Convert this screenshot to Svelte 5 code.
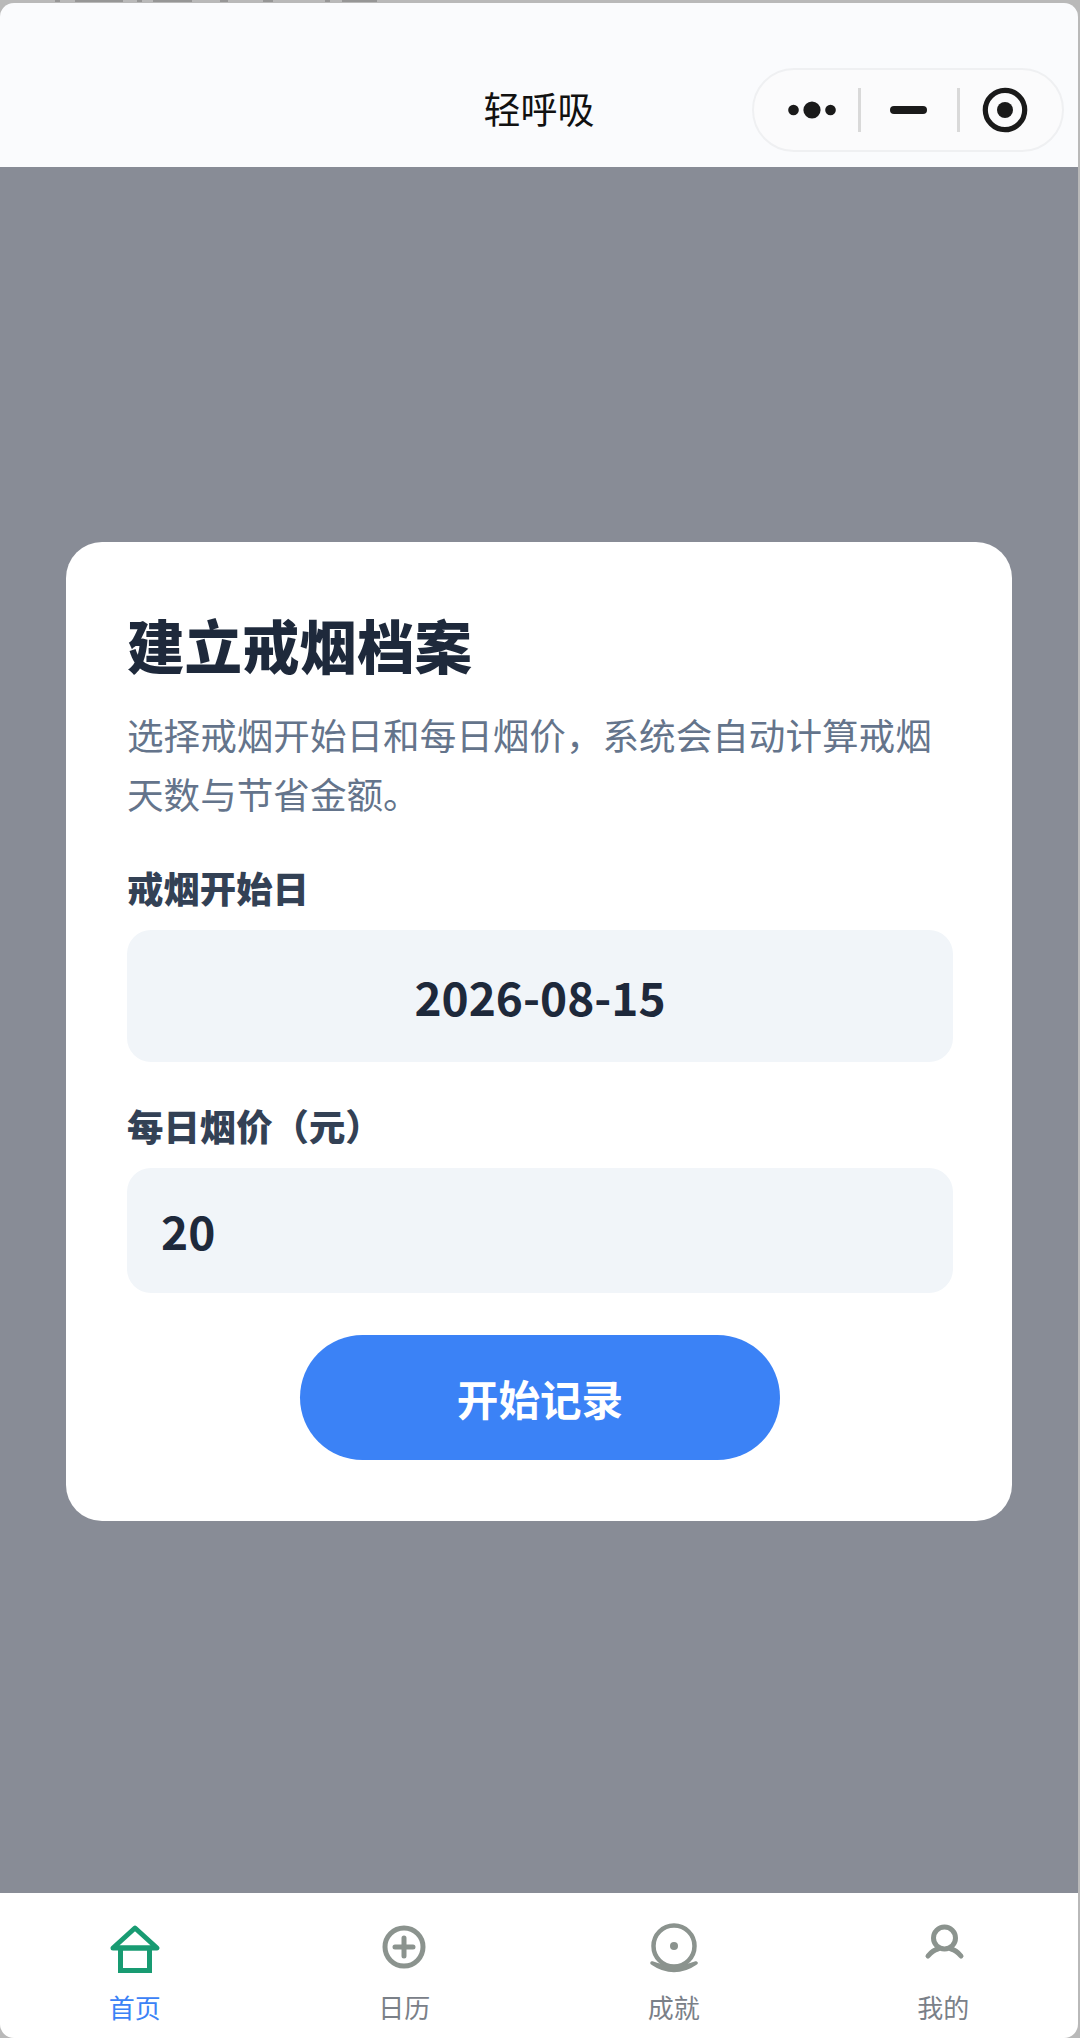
<script>
    const tabs = [
        { label: '首页', icon: 'home', active: true },
        { label: '日历', icon: 'plus' },
        { label: '成就', icon: 'target' },
        { label: '我的', icon: 'user' }
    ];

    // bits of the page behind the window that show above its top edge
    const ghost = [[55, 5], [75, 48], [137, 5], [153, 39], [220, 8], [263, 10], [325, 5], [342, 35]];

    let startDate = '2026-08-15';
    let price = '20';
</script>

<div class="window">
    <svg class="ghost" width="400" height="3">
        {#each ghost as g}
            <rect x={g[0]} y="0" width={g[1]} height="2" />
        {/each}
    </svg>

    <header class="navbar">
        <span class="title">轻呼吸</span>
        <div class="capsule">
            <svg class="cap-icon dots" width="48" height="20" viewBox="0 0 48 20">
                <circle cx="5.5" cy="10" r="5.3" />
                <circle cx="24" cy="10" r="8.6" />
                <circle cx="42.5" cy="10" r="5.3" />
            </svg>
            <i class="sep"></i>
            <svg class="cap-icon dash" width="37" height="10" viewBox="0 0 37 10">
                <rect x="0" y="1" width="37" height="8" rx="4" />
            </svg>
            <i class="sep"></i>
            <svg class="cap-icon target" width="46" height="46" viewBox="0 0 46 46">
                <circle cx="23" cy="23" r="19.7" fill="none" stroke="#1a1a1a" stroke-width="5.2" />
                <circle cx="23" cy="23" r="8" />
            </svg>
        </div>
    </header>

    <main class="mask">
        <section class="card">
            <h1>建立戒烟档案</h1>
            <p class="desc">选择戒烟开始日和每日烟价，系统会自动计算戒烟天数与节省金额。</p>
            <div class="label">戒烟开始日</div>
            <div class="picker">{startDate}</div>
            <div class="label second">每日烟价（元）</div>
            <div class="field">{price}</div>
            <button class="start">开始记录</button>
        </section>
    </main>

    <nav class="tabbar">
        {#each tabs as tab}
            <div class="tab" class:active={tab.active}>
                <svg width="56" height="56" viewBox="0 0 56 56" fill="none">
                    {#if tab.icon === 'home'}
                        <path d="M6 28 L28 8 L50 28 Z" stroke="#189b72" stroke-width="5" stroke-linejoin="round" />
                        <rect x="13.5" y="28" width="29" height="22.5" stroke="#189b72" stroke-width="5" />
                    {:else if tab.icon === 'plus'}
                        <circle cx="28" cy="27" r="19" stroke="#8b938e" stroke-width="5" />
                        <path d="M28 18 V36 M19 27 H37" stroke="#8b938e" stroke-width="5" stroke-linecap="round" />
                    {:else if tab.icon === 'target'}
                        <circle cx="28" cy="26" r="20.5" stroke="#8b938e" stroke-width="4.5" />
                        <circle cx="28" cy="26" r="4" fill="#8b938e" />
                        <path d="M6 43 Q28 58 50 43 Q28 51 6 43 Z" fill="#8b938e" stroke="#8b938e" stroke-width="3.5" stroke-linejoin="round" />
                    {:else}
                        <circle cx="29.5" cy="18" r="11" stroke="#8b938e" stroke-width="5" />
                        <path d="M13 36 Q18 30 23 29 M46 36 Q41 30 36 29" stroke="#8b938e" stroke-width="5" stroke-linecap="round" />
                    {/if}
                </svg>
                <span>{tab.label}</span>
            </div>
        {/each}
    </nav>
</div>

<style>
    :global(body) {
        margin: 0;
        background: #b9b9b9;
    }

    .window {
        position: relative;
        height: 2038px;
        box-sizing: border-box;
        padding: 3px 2px 0 0;
        display: flex;
        flex-direction: column;
        font-family: "Noto Sans CJK SC", "Noto Sans", sans-serif;
    }

    .ghost {
        position: absolute;
        left: 0;
        top: 0;
        fill: #969696;
    }

    .navbar {
        position: relative;
        height: 164px;
        flex-shrink: 0;
        box-sizing: border-box;
        background: #fafbfd;
        border-radius: 14px 14px 0 0;
        display: flex;
        justify-content: center;
        padding-top: 78px;
    }

    .title {
        font-size: 37px;
        line-height: 54px;
        color: #111;
    }

    .capsule {
        position: absolute;
        right: 14px;
        top: 65px;
        width: 312px;
        height: 84px;
        box-sizing: border-box;
        border: 2px solid #eff0f2;
        border-radius: 42px;
        background: #fbfbfc;
        display: flex;
        align-items: center;
        padding-left: 34px;
    }

    .cap-icon {
        fill: #1a1a1a;
        display: block;
    }

    .dots {
        margin-right: 22px;
    }

    .dash {
        margin: 0 30px 0 29px;
    }

    .target {
        margin-left: 22px;
    }

    .sep {
        width: 3px;
        height: 44px;
        background: #d9d9d9;
    }

    .mask {
        flex: 1;
        background: #888c96;
        display: flex;
        flex-direction: column;
        align-items: center;
        padding-top: 375px;
    }

    .card {
        width: 946px;
        height: 979px;
        box-sizing: border-box;
        background: #fff;
        border-radius: 36px;
        padding: 61px 59px 0 61px;
    }

    h1 {
        margin: 0;
        font-size: 57.5px;
        line-height: 82px;
        font-weight: 900;
        color: #1e293b;
    }

    .desc {
        margin: 21px 0 0;
        font-size: 36.6px;
        line-height: 58.5px;
        color: #64748b;
    }

    .label {
        margin-top: 37px;
        font-size: 36.4px;
        line-height: 54px;
        font-weight: 900;
        color: #334155;
    }

    .label.second {
        margin-top: 36px;
    }

    .picker,
    .field {
        margin-top: 16px;
        background: #f1f5f9;
        border-radius: 24px;
        font-size: 46px;
        font-weight: 700;
        color: #1e293b;
    }

    .picker {
        height: 132px;
        line-height: 132px;
        text-align: center;
    }

    .field {
        height: 125px;
        line-height: 125px;
        padding-left: 34px;
    }

    .start {
        display: block;
        width: 480px;
        height: 125px;
        margin: 42px auto 0;
        border: none;
        border-radius: 63px;
        background: #3b82f6;
        color: #fff;
        font-family: inherit;
        font-size: 41.6px;
        font-weight: 700;
    }

    .tabbar {
        height: 145px;
        flex-shrink: 0;
        background: #fff;
        border-radius: 0 0 14px 14px;
        display: flex;
    }

    .tab {
        flex: 1;
        display: flex;
        flex-direction: column;
        align-items: center;
        padding-top: 27px;
        font-size: 26px;
        line-height: 38px;
        color: #7a8088;
    }

    .tab svg {
        display: block;
        margin-bottom: 12px;
    }

    .tab.active {
        color: #3b82f6;
    }
</style>
